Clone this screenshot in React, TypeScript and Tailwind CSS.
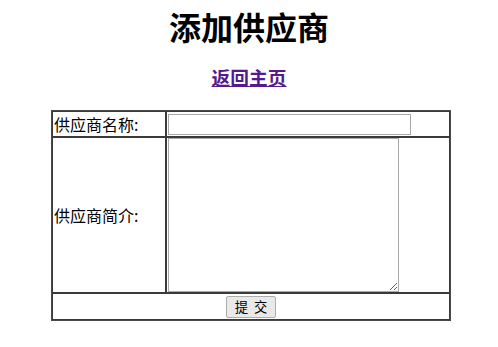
export default function App() {
  return (
    <div
      className="w-[498px] h-[347px] bg-white text-black"
      style={{ fontFamily: '"Noto Sans CJK SC", "Microsoft YaHei", sans-serif' }}
    >
      <h1 className="pt-[10px] text-center text-[32px] font-bold leading-[32px]">添加供应商</h1>

      <h3 className="mt-[25px] text-center text-[18.72px] font-bold leading-[19px]">
        <a href="#" className="text-[#551a8b] underline">
          返回主页
        </a>
      </h3>

      <form className="mt-[24px] ml-[51px]" onSubmit={(e) => e.preventDefault()}>
        <table className="w-[400px] border-separate border-spacing-0 border border-[#4a4a4a] text-[16px] leading-[18px]">
          <tbody>
            <tr>
              <td className="h-[26px] w-[114px] border border-[#3a3a3a] p-px align-middle">供应商名称:</td>
              <td className="border border-[#3a3a3a] p-px align-middle">
                <input
                  type="text"
                  name="name"
                  className="block h-[21px] w-[243px] border border-[#a9a9a9] bg-white px-[2px] text-[13px] outline-none"
                />
              </td>
            </tr>
            <tr>
              <td className="h-[156px] border border-[#3a3a3a] p-px align-middle">供应商简介:</td>
              <td className="border border-[#3a3a3a] p-0 align-top">
                <textarea
                  name="intro"
                  className="block h-[154px] w-[231px] border border-[#a9a9a9] bg-white text-[13px] outline-none ml-px"
                />
              </td>
            </tr>
            <tr>
              <td colSpan={2} className="h-[27px] border border-[#3a3a3a] p-px text-center align-middle">
                <button
                  type="submit"
                  className="inline-block h-[22px] w-[50px] rounded-[2px] border border-[#adadad] bg-[#e9e9e9] text-[13.33px] leading-[20px]"
                >
                  提&nbsp;&nbsp;交
                </button>
              </td>
            </tr>
          </tbody>
        </table>
      </form>
    </div>
  )
}
